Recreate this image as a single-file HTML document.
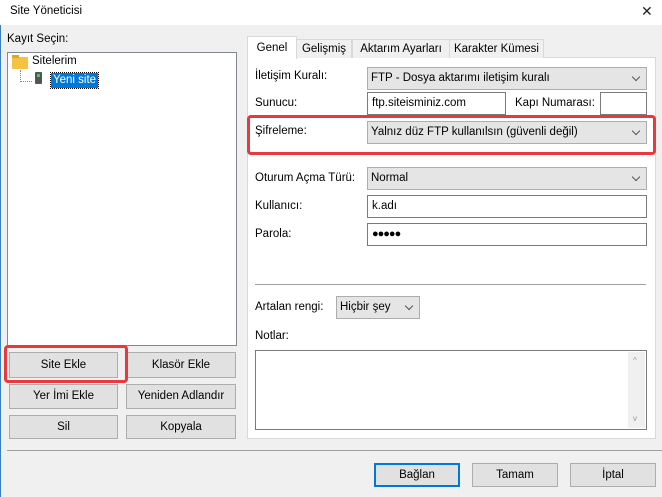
<!DOCTYPE html>
<html><head><meta charset="utf-8"><style>
*{box-sizing:border-box;margin:0;padding:0}
body{width:662px;height:497px;background:#f0f0f0;font-family:"Liberation Sans",sans-serif;font-size:11.5px;color:#000;position:relative;overflow:hidden}
.a{position:absolute;white-space:nowrap}
.btn{position:absolute;background:#e1e1e1;border:1px solid #adadad;text-align:center;line-height:22px}
.in{position:absolute;background:#fff;border:1px solid #7a7a7a;padding-left:4px;line-height:20px}
.cb{position:absolute;background:#e5e5e5;border:1px solid #adadad;padding-left:3px;line-height:20px}
.cb:after{content:"";position:absolute;right:7px;top:6px;width:5px;height:5px;border-right:1px solid #555;border-bottom:1px solid #555;transform:rotate(45deg)}
.red{position:absolute;border:3px solid #e8393e;border-radius:4px}
.tab{position:absolute;background:#f0f0f0;border:1px solid #d9d9d9;border-bottom:none;text-align:center;line-height:19px}
</style></head><body>
<div class="a" style="left:0;top:0;width:662px;height:25px;background:#fff"></div>
<div class="a" style="left:0;top:25px;width:1px;height:472px;background:#3c7fc0"></div>
<div class="a" style="left:10px;top:5px">Site Yöneticisi</div>
<div class="a" style="left:641px;top:3px;font-size:14px;color:#222">✕</div>
<div class="a" style="left:7px;top:33px">Kayıt Seçin:</div>
<div class="a" style="left:7px;top:52px;width:230px;height:294px;background:#fff;border:1px solid #828790"></div>
<div class="a" style="left:12px;top:57px;width:16px;height:12px;background:#f5c242;border-radius:1px"></div>
<div class="a" style="left:12px;top:55px;width:7px;height:3px;background:#e0a820"></div>
<div class="a" style="left:32px;top:55px">Sitelerim</div>
<div class="a" style="left:20px;top:70px;width:1px;height:10px;border-left:1px dotted #888"></div>
<div class="a" style="left:20px;top:81px;width:12px;border-top:1px dotted #888"></div>
<div class="a" style="left:35px;top:72px;width:7px;height:12px;background:#555;border-radius:1px"></div>
<div class="a" style="left:37px;top:74px;width:3px;height:3px;background:#4c4"></div>
<div class="a" style="left:51px;top:73px;background:#0078d7;color:#fff;padding:0 2px;line-height:15px;outline:1px dotted #000">Yeni site</div>
<div class="btn" style="left:9px;top:352px;width:109px;height:26px;line-height:24px">Site Ekle</div>
<div class="btn" style="left:126px;top:352px;width:110px;height:26px;line-height:24px">Klasör Ekle</div>
<div class="btn" style="left:9px;top:384px;width:109px;height:25px">Yer İmi Ekle</div>
<div class="btn" style="left:126px;top:384px;width:110px;height:25px">Yeniden Adlandır</div>
<div class="btn" style="left:9px;top:415px;width:109px;height:24px">Sil</div>
<div class="btn" style="left:126px;top:415px;width:110px;height:24px">Kopyala</div>
<div class="red" style="left:4px;top:345px;width:124px;height:38px"></div>
<div class="a" style="left:247px;top:57px;width:409px;height:382px;background:#fff;border:1px solid #d9d9d9"></div>
<div class="tab" style="left:296px;top:39px;width:56px;height:19px">Gelişmiş</div>
<div class="tab" style="left:352px;top:39px;width:98px;height:19px">Aktarım Ayarları</div>
<div class="tab" style="left:449px;top:39px;width:95px;height:19px">Karakter Kümesi</div>
<div class="tab" style="left:247px;top:36px;width:50px;height:23px;background:#fff;line-height:22px">Genel</div>
<div class="a" style="left:255px;top:70px">İletişim Kuralı:</div>
<div class="cb" style="left:367px;top:67px;width:280px;height:23px">FTP - Dosya aktarımı iletişim kuralı</div>
<div class="a" style="left:255px;top:97px">Sunucu:</div>
<div class="in" style="left:367px;top:92px;width:139px;height:23px">ftp.siteisminiz.com</div>
<div class="a" style="left:515px;top:97px">Kapı Numarası:</div>
<div class="in" style="left:600px;top:92px;width:47px;height:23px"></div>
<div class="a" style="left:255px;top:125px">Şifreleme:</div>
<div class="cb" style="left:367px;top:121px;width:280px;height:23px">Yalnız düz FTP kullanılsın (güvenli değil)</div>
<div class="red" style="left:247px;top:115px;width:409px;height:40px"></div>
<div class="a" style="left:255px;top:172px">Oturum Açma Türü:</div>
<div class="cb" style="left:367px;top:167px;width:280px;height:23px">Normal</div>
<div class="a" style="left:255px;top:200px">Kullanıcı:</div>
<div class="in" style="left:367px;top:195px;width:280px;height:23px">k.adı</div>
<div class="a" style="left:255px;top:228px">Parola:</div>
<div class="in" style="left:367px;top:223px;width:280px;height:23px;font-size:11px;letter-spacing:-1px">●●●●●</div>
<div class="a" style="left:255px;top:284px;width:391px;height:1px;background:#a0a0a0"></div>
<div class="a" style="left:255px;top:301px">Artalan rengi:</div>
<div class="cb" style="left:336px;top:296px;width:84px;height:23px">Hiçbir şey</div>
<div class="a" style="left:255px;top:330px">Notlar:</div>
<div class="a" style="left:255px;top:350px;width:392px;height:80px;background:#fff;border:1px solid #7a7a7a"></div>
<div class="a" style="left:628px;top:352px;width:17px;height:76px;background:#f0f0f0"></div>
<div class="a" style="left:633px;top:356px;font-size:8px;color:#999">^</div>
<div class="a" style="left:633px;top:414px;font-size:8px;color:#999">v</div>
<div class="a" style="left:7px;top:450px;width:655px;height:1px;background:#a0a0a0"></div>
<div class="btn" style="left:374px;top:463px;width:86px;height:24px;border:2px solid #0078d7;line-height:20px">Bağlan</div>
<div class="btn" style="left:472px;top:463px;width:86px;height:24px">Tamam</div>
<div class="btn" style="left:570px;top:463px;width:86px;height:24px">İptal</div>
</body></html>
